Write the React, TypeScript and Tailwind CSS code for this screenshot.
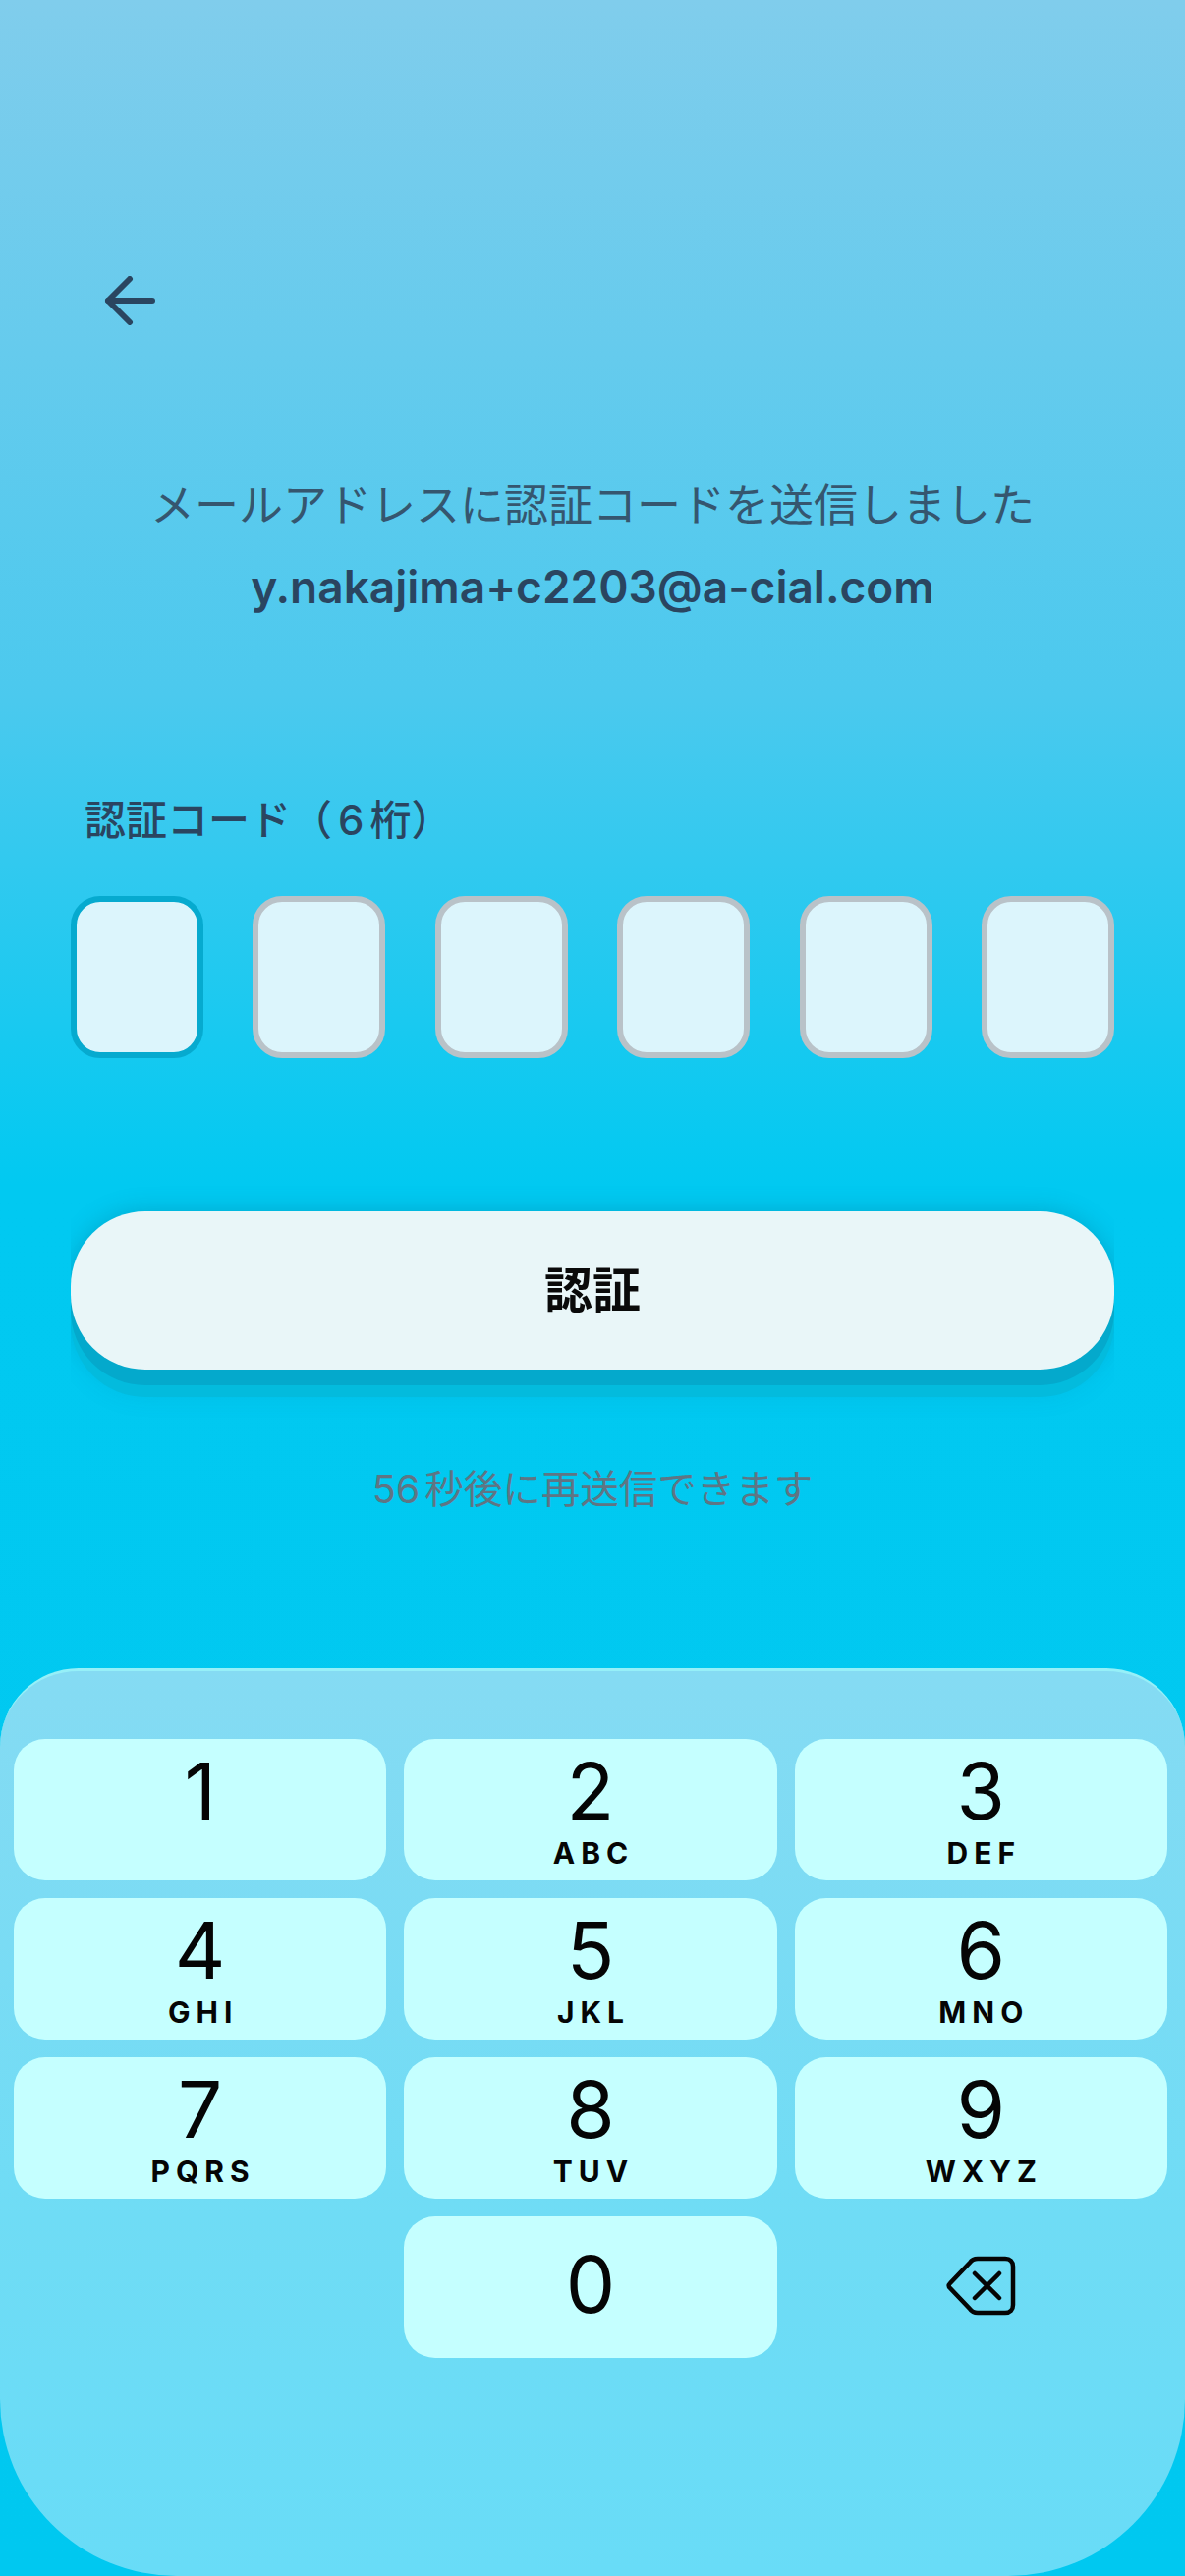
const keys: [string, string][] = [
  ["1", ""],
  ["2", "ABC"],
  ["3", "DEF"],
  ["4", "GHI"],
  ["5", "JKL"],
  ["6", "MNO"],
  ["7", "PQRS"],
  ["8", "TUV"],
  ["9", "WXYZ"],
];

const jp = "font-['Inter','Noto_Sans_CJK_JP',sans-serif]";

function Key({ digit, letters }: { digit: string; letters: string }) {
  return (
    <div className="h-[144px] rounded-[32px] bg-[#c5ffff] text-[#050505]">
      <div className="flex h-[97px] items-end justify-center text-[80px] leading-[88px] font-normal">{digit}</div>
      {letters && (
        <div className="mt-[4px] flex justify-center pl-[6px] text-[30px] leading-[30px] font-bold tracking-[6px]">{letters}</div>
      )}
    </div>
  );
}

export default function App() {
  return (
    <div className={`flex h-[2622px] w-[1206px] flex-col overflow-hidden bg-[linear-gradient(180deg,#80cdec_0%,#4bc9ee_27%,#01c9f1_46%,#00c8f0_100%)] ${jp}`}>
      <div className="pt-[281px] pl-[105px]">
        <svg width="56" height="50" viewBox="0 0 56 50" fill="none" stroke="#2a4560" strokeWidth="6" strokeLinecap="round" strokeLinejoin="round">
          <path d="M27 3 L5 25 L27 47" />
          <path d="M5 25 H50" />
        </svg>
      </div>

      <p className="mt-[154px] text-center text-[45px] leading-[60px] text-[#35566f]">
        メールアドレスに認証コードを送信しました
      </p>
      <p className="mt-[22px] text-center text-[46px] leading-[60px] font-semibold text-[#2a4560]">
        y.nakajima+c2203@a-cial.com
      </p>

      <p className="mt-[178px] pl-[86px] text-[42px] leading-[60px] font-medium text-[#2a4560]">
        認証コード（<span className="mx-[6px]">6</span>桁）
      </p>

      <div className="mt-[47px] flex justify-between px-[72px]">
        {[0, 1, 2, 3, 4, 5].map((i) => (
          <div
            key={i}
            className={
              i === 0
                ? "h-[165px] w-[135px] rounded-[30px] border-[6px] border-[#06aacf] bg-[#dcf5fc]"
                : "h-[165px] w-[135px] rounded-[30px] border-[6px] border-[#b9c2c8] bg-[#dcf5fc]"
            }
          />
        ))}
      </div>

      <div className="mx-[72px] mt-[126px] h-[251px] overflow-hidden pt-[30px]">
        <div className="flex h-[161px] items-center justify-center rounded-[76px] bg-[#e9f6f8] text-[49px] font-bold text-[#0a0a0a] shadow-[0_16px_0_0_#04a9cc,0_28px_0_0_#03bbdd,0_26px_26px_0_rgba(0,110,150,0.12),0_0_24px_0_rgba(0,100,130,0.30)]">
          認証
        </div>
      </div>

      <p className="mt-[32px] text-center text-[39.5px] leading-[60px] text-[#5f7584]">
        56<span className="ml-[5px]">秒後に再送信できます</span>
      </p>

      <div className="mt-[152px] flex-1 rounded-t-[80px] rounded-b-[180px] border-t-[3px] border-[#96f0f8] bg-[linear-gradient(180deg,#85dbf3_0%,#6fdcf5_60%,#68dcf7_100%)] pt-[69px] pr-[18px] pl-[14px]">
        <div className="grid grid-cols-3 gap-[18px]">
          {keys.map(([d, l]) => (
            <Key key={d} digit={d} letters={l} />
          ))}
          <div className="h-[144px]" />
          <div className="flex h-[144px] items-center justify-center rounded-[32px] bg-[#c5ffff] pb-[6px] text-[80px] leading-none font-normal text-[#050505]">
            0
          </div>
          <div className="flex h-[144px] items-center justify-center">
            <svg width="71" height="61" viewBox="0 0 71 61" fill="none" stroke="#050505" strokeWidth="4.5" strokeLinecap="round" strokeLinejoin="round" className="mb-[4px]">
              <path d="M4 33 C2 31 2 30 4 28 L24 7 C26 4 28 3 32 3 H60 C65 3 68 6 68 11 V50 C68 55 65 58 60 58 H32 C28 58 26 57 24 54 Z" />
              <path d="M29 18 L54 43 M54 18 L29 43" />
            </svg>
          </div>
        </div>
      </div>
    </div>
  );
}
